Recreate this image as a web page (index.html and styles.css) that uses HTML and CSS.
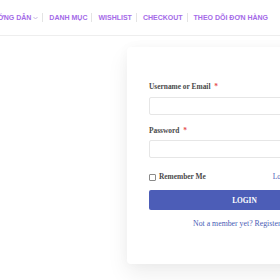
FILE: index.html
```html
<!DOCTYPE html>
<html>
<head>
<meta charset="utf-8">
<link rel="stylesheet" href="styles.css">
</head>
<body>
<header class="topbar">
  <ul class="menu">
    <li class="item">HƯỚNG DẪN<svg class="chev" width="5" height="4" viewBox="0 0 5 4"><path d="M0.5 1 L2.5 3 L4.5 1" fill="none" stroke="#b9a6d8" stroke-width="0.8"/></svg></li>
    <li class="sep"></li>
    <li class="item">DANH MỤC</li>
    <li class="sep"></li>
    <li class="item">WISHLIST</li>
    <li class="sep"></li>
    <li class="item">CHECKOUT</li>
    <li class="sep"></li>
    <li class="item">THEO DÕI ĐƠN HÀNG</li>
  </ul>
</header>
<main class="page">
  <form class="card">
    <label class="label">Username or Email <span class="req">*</span></label>
    <div class="input"></div>
    <label class="label pw">Password <span class="req">*</span></label>
    <div class="input short"></div>
    <div class="row">
      <span class="check"><span class="box"></span>Remember Me</span>
      <span class="lost">Lost your password?</span>
    </div>
    <div class="btn">LOGIN</div>
    <p class="register">Not a member yet? Register now</p>
  </form>
</main>
</body>
</html>
```
FILE: styles.css
```css
html, body {
  margin: 0;
  padding: 0;
  background: #fff;
  overflow: hidden;
  width: 280px;
  height: 280px;
}
.topbar {
  height: 35px;
  border-bottom: 1px solid #eeeeee;
  display: flex;
  justify-content: flex-end;
  padding-right: 12px;
}
.menu {
  list-style: none;
  margin: 0;
  padding: 0;
  display: flex;
  align-items: center;
  white-space: nowrap;
  font-family: "Liberation Sans", Arial, sans-serif;
  font-size: 7px;
  font-weight: 700;
  color: #a46ae8;
}
.item {
  display: flex;
  align-items: center;
  flex-shrink: 0;
}
.chev {
  margin-left: 2px;
}
.sep {
  width: 1px;
  height: 9px;
  background: #e4e4e4;
  margin: 0 6px 0 4px;
  flex-shrink: 0;
}
.page {
  padding: 11px 0 0 127px;
}
.card {
  width: 235px;
  box-sizing: border-box;
  background: #fff;
  border-radius: 4px;
  box-shadow: 0 10px 22px rgba(0,0,0,0.07), 0 0 12px rgba(0,0,0,0.03);
  padding: 35px 22px 35px;
  display: flex;
  flex-direction: column;
  font-family: "Liberation Serif", "Times New Roman", serif;
}
.label {
  font-size: 7.4px;
  font-weight: 700;
  color: #4a4a4a;
  line-height: 10px;
}
.label.pw {
  margin-top: 11px;
}
.req {
  color: #e5484d;
  margin-left: 2px;
}
.input {
  height: 16px;
  border: 1px solid #e6e6e6;
  border-radius: 2px;
  margin-top: 5px;
  background: #fff;
}
.input.short {
  margin-top: 4px;
}
.row {
  margin-top: 14px;
  display: flex;
  align-items: center;
  font-size: 7.4px;
  font-weight: 700;
  line-height: 10px;
  color: #4a4a4a;
}
.check {
  display: flex;
  align-items: center;
  flex-shrink: 0;
}
.box {
  width: 5px;
  height: 5px;
  border: 1px solid #8a8a8a;
  border-radius: 1px;
  margin-right: 3px;
}
.lost {
  color: #4a5bb5;
  font-weight: 400;
  white-space: nowrap;
  margin-left: 67px;
  flex-shrink: 0;
}
.btn {
  margin-top: 8px;
  height: 20px;
  border-radius: 2px;
  background: #4c5db7;
  color: #fff;
  font-size: 7.4px;
  font-weight: 700;
  display: flex;
  align-items: center;
  justify-content: center;
}
.register {
  margin: 9px 0 0;
  text-align: center;
  font-size: 7.8px;
  line-height: 10px;
  color: #4a5bb5;
  white-space: nowrap;
}
```
